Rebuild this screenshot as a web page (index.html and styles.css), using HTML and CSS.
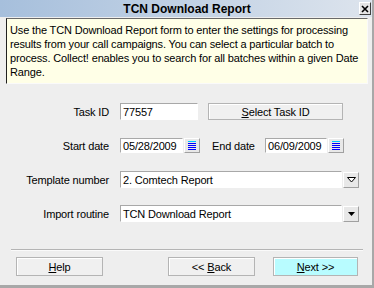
FILE: index.html
```html
<!DOCTYPE html>
<html>
<head>
<meta charset="utf-8">
<link rel="stylesheet" href="styles.css">
</head>
<body>
<div class="window">
  <div class="titlebar">
    <span></span>
    <span class="title">TCN Download Report</span>
    <span class="close"><svg width="10" height="10" viewBox="0 0 10 10"><path d="M2 2 L8 8 M8 2 L2 8" stroke="#000" stroke-width="1.6" fill="none"/></svg></span>
  </div>
  <div class="info">Use the TCN Download Report form to enter the settings for processing results from your call campaigns. You can select a particular batch to process. Collect! enables you to search for all batches within a given Date Range.</div>
  <div class="form">
    <div class="row">
      <span class="lbl">Task ID</span>
      <div class="fields">
        <span class="input w-task">77557</span>
        <span class="btn btn-select"><span><u>S</u>elect Task ID</span></span>
      </div>
    </div>
    <div class="row">
      <span class="lbl">Start date</span>
      <div class="fields">
        <span class="input date w-start">05/28/2009</span>
        <span class="cal"><svg width="10" height="11" viewBox="0 0 10 11"><rect x="1" y="1" width="8" height="1" fill="#00c8ff"/><rect x="1" y="3" width="8" height="1" fill="#0000ff"/><rect x="1" y="5" width="8" height="1" fill="#0000ff"/><rect x="1" y="7" width="8" height="1" fill="#0000ff"/><rect x="1" y="9" width="8" height="1" fill="#0000ff"/></svg></span>
        <span class="lbl2">End date</span>
        <span class="input date w-end">06/09/2009</span>
        <span class="cal"><svg width="10" height="11" viewBox="0 0 10 11"><rect x="1" y="1" width="8" height="1" fill="#00c8ff"/><rect x="1" y="3" width="8" height="1" fill="#0000ff"/><rect x="1" y="5" width="8" height="1" fill="#0000ff"/><rect x="1" y="7" width="8" height="1" fill="#0000ff"/><rect x="1" y="9" width="8" height="1" fill="#0000ff"/></svg></span>
      </div>
    </div>
    <div class="row">
      <span class="lbl">Template number</span>
      <div class="fields">
        <span class="input w-combo">2. Comtech Report</span>
        <span class="drop"><svg width="9" height="6" viewBox="0 0 9 6"><path d="M0.5 0.5 H8.5 L4.5 5 Z" fill="#fff" stroke="#000" stroke-width="1"/></svg></span>
      </div>
    </div>
    <div class="row">
      <span class="lbl">Import routine</span>
      <div class="fields">
        <span class="input w-combo">TCN Download Report</span>
        <span class="drop"><svg width="9" height="6" viewBox="0 0 9 6"><path d="M1 1 H8 L4.5 5 Z" fill="#000"/></svg></span>
      </div>
    </div>
  </div>
  <div class="sep"></div>
  <div class="buttons">
    <span class="btn btn-help"><span><u>H</u>elp</span></span>
    <span class="btn btn-back"><span>&lt;&lt; <u>B</u>ack</span></span>
    <span class="btn btn-next"><span><u>N</u>ext &gt;&gt;</span></span>
  </div>
</div>
</body>
</html>
```
FILE: styles.css
```css
html, body {
  margin: 0;
  padding: 0;
  background: #eeeeee;
}
.window {
  width: 374px;
  height: 288px;
  box-sizing: border-box;
  border-right: 2px solid #a8a8a8;
  border-bottom: 3px solid #a8a8a8;
  background: #eeeeee;
  font-family: "Liberation Sans", Arial, sans-serif;
  font-size: 11px;
  letter-spacing: -0.15px;
  color: #000;
  display: flex;
  flex-direction: column;
  overflow: hidden;
}
.titlebar {
  height: 17px;
  display: grid;
  grid-template-columns: 1fr auto 1fr;
  align-items: center;
  background: linear-gradient(to right, #a6bfdc, #dde4ed);
}
.title {
  font-size: 12px;
  font-weight: bold;
  letter-spacing: 0;
  margin-left: 2px;
}
.close {
  justify-self: end;
  width: 10px;
  height: 11px;
  margin-right: 1px;
  background: #e4e4e4;
  border: 1px solid;
  border-color: #fff #404040 #404040 #fff;
  display: flex;
  align-items: center;
  justify-content: center;
}
.info {
  margin: 1px 4px 0 6px;
  height: 66px;
  box-sizing: border-box;
  background: #ffffe7;
  border: 1px solid;
  border-color: #6a6a6a #fafafa #fafafa #202020;
  padding: 4px 4px 0 3px;
  line-height: 14px;
}
.form {
  margin-top: 19px;
  display: flex;
  flex-direction: column;
  gap: 17px;
}
.row {
  display: grid;
  grid-template-columns: 109px 1fr;
  column-gap: 11px;
  height: 17px;
  align-items: center;
}
.lbl {
  text-align: right;
  white-space: nowrap;
}
.fields {
  display: flex;
  align-items: center;
  height: 17px;
}
.input {
  box-sizing: border-box;
  height: 17px;
  background: #fff;
  border-top: 1px solid #a8a8a8;
  border-left: 1px solid #a8a8a8;
  border-right: 1px solid #fff;
  border-bottom: 1px solid #fff;
  padding-left: 2px;
  display: flex;
  align-items: center;
  white-space: nowrap;
}
.input.date {
  height: 15px;
}
.w-task { width: 78px; }
.w-start { width: 63px; }
.w-end { width: 62px; }
.w-combo { width: 222px; }
.btn {
  box-sizing: border-box;
  display: flex;
  align-items: center;
  justify-content: center;
  background: #f0f0f0;
  border: 1px solid #b4b4b4;
  box-shadow: inset 1px 1px 0 #ffffff;
  white-space: nowrap;
}
.btn-select {
  width: 135px;
  height: 17px;
  margin-left: 10px;
}
.cal {
  box-sizing: border-box;
  width: 16px;
  height: 15px;
  margin-left: 1px;
  background: #e8e8e8;
  border: 1px solid;
  border-color: #fff #a0a0a0 #a0a0a0 #fff;
  display: flex;
  align-items: center;
  justify-content: center;
}
.lbl2 {
  margin-left: 12px;
  width: 53px;
  white-space: nowrap;
}
.drop {
  box-sizing: border-box;
  width: 16px;
  height: 16px;
  margin-left: 1px;
  background: #e8e8e8;
  border: 1px solid;
  border-color: #fff #a0a0a0 #a0a0a0 #fff;
  display: flex;
  align-items: center;
  justify-content: center;
}
.sep {
  margin: 27px 0 0 11px;
  width: 352px;
  height: 1px;
  background: #b4b4b4;
  border-bottom: 1px solid #fafafa;
}
.buttons {
  display: flex;
  margin-top: 6px;
  height: 19px;
}
.btn-help {
  width: 87px;
  margin-left: 16px;
}
.btn-back {
  width: 87px;
  margin-left: 65px;
}
.btn-next {
  width: 85px;
  margin-left: 18px;
  background: #b8fcff;
}
```
